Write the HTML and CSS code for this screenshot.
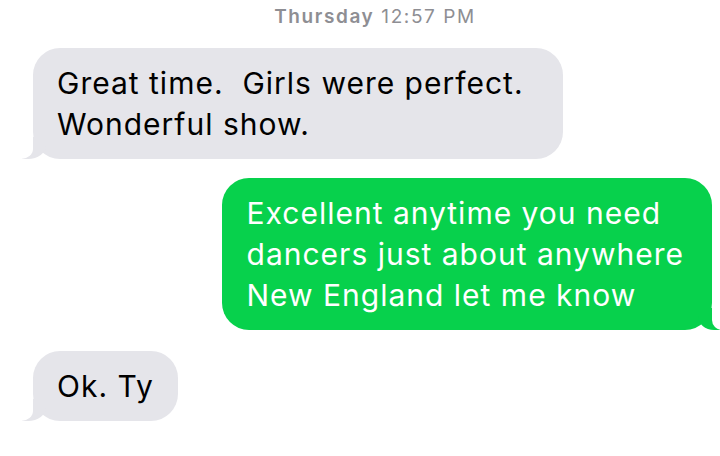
FILE: index.html
```html
<!DOCTYPE html>
<html lang="en">

<head>
  <meta charset="UTF-8">
  <meta name="viewport" content="width=device-width, initial-scale=1.0">
  <title>Messages</title>
  <link rel="stylesheet" href="styles.css">
</head>

<body>
  <!-- Data da conversa -->
  <div class="timestamp"><b>Thursday</b> 12:57 PM</div>

  <section class="thread">
    <div class="bubble received">Great time.&nbsp; Girls were perfect.<br>Wonderful show.</div>
    <div class="bubble sent">Excellent anytime you need<br>dancers just about anywhere<br>New England let me know</div>
    <div class="bubble received">Ok. Ty</div>
  </section>
</body>

</html>
```

FILE: styles.css
```css
/* Estilos gerais */
body {
  margin: 0;
  padding: 0;
  background: #fff;
  font-family: Inter, "Liberation Sans", Arial, sans-serif;
  overflow: hidden;
}

.timestamp {
  text-align: center;
  color: #8e8e93;
  font-size: 19px;
  line-height: 20px;
  letter-spacing: 1.6px;
  padding-top: 7px;
  padding-left: 30px;
}

.timestamp b {
  font-weight: 600;
}

.thread {
  display: flex;
  flex-direction: column;
  padding: 21px 8px 0 33px;
}

/* Balões de mensagem */
.bubble {
  position: relative;
  width: fit-content;
  font-size: 30px;
  line-height: 41px;
  letter-spacing: 1px;
  padding: 15px 24px 14px 24px;
  border-radius: 27px;
  white-space: nowrap;
}

.bubble::before,
.bubble::after {
  content: "";
  position: absolute;
  bottom: 0;
  height: 22px;
}

.received {
  background: #e5e5ea;
  color: #000;
  align-self: flex-start;
  padding-right: 39px;
}

.received::before {
  left: -11px;
  width: 24px;
  background: #e5e5ea;
  border-bottom-right-radius: 18px 14px;
}

.received::after {
  left: -20px;
  width: 20px;
  background: #fff;
  border-bottom-right-radius: 12px 10px;
}

.sent {
  background: #07d14c;
  color: #fff;
  align-self: flex-end;
  margin-top: 19px;
  padding-left: 25px;
  padding-right: 28px;
}

.sent::before {
  right: -8px;
  width: 22px;
  background: #07d14c;
  border-bottom-left-radius: 16px 14px;
}

.sent::after {
  right: -20px;
  width: 20px;
  background: #fff;
  border-bottom-left-radius: 10px 10px;
}

.sent + .received {
  margin-top: 21px;
  padding-right: 24px;
}

.received + .sent {
  margin-top: 19px;
}
```
